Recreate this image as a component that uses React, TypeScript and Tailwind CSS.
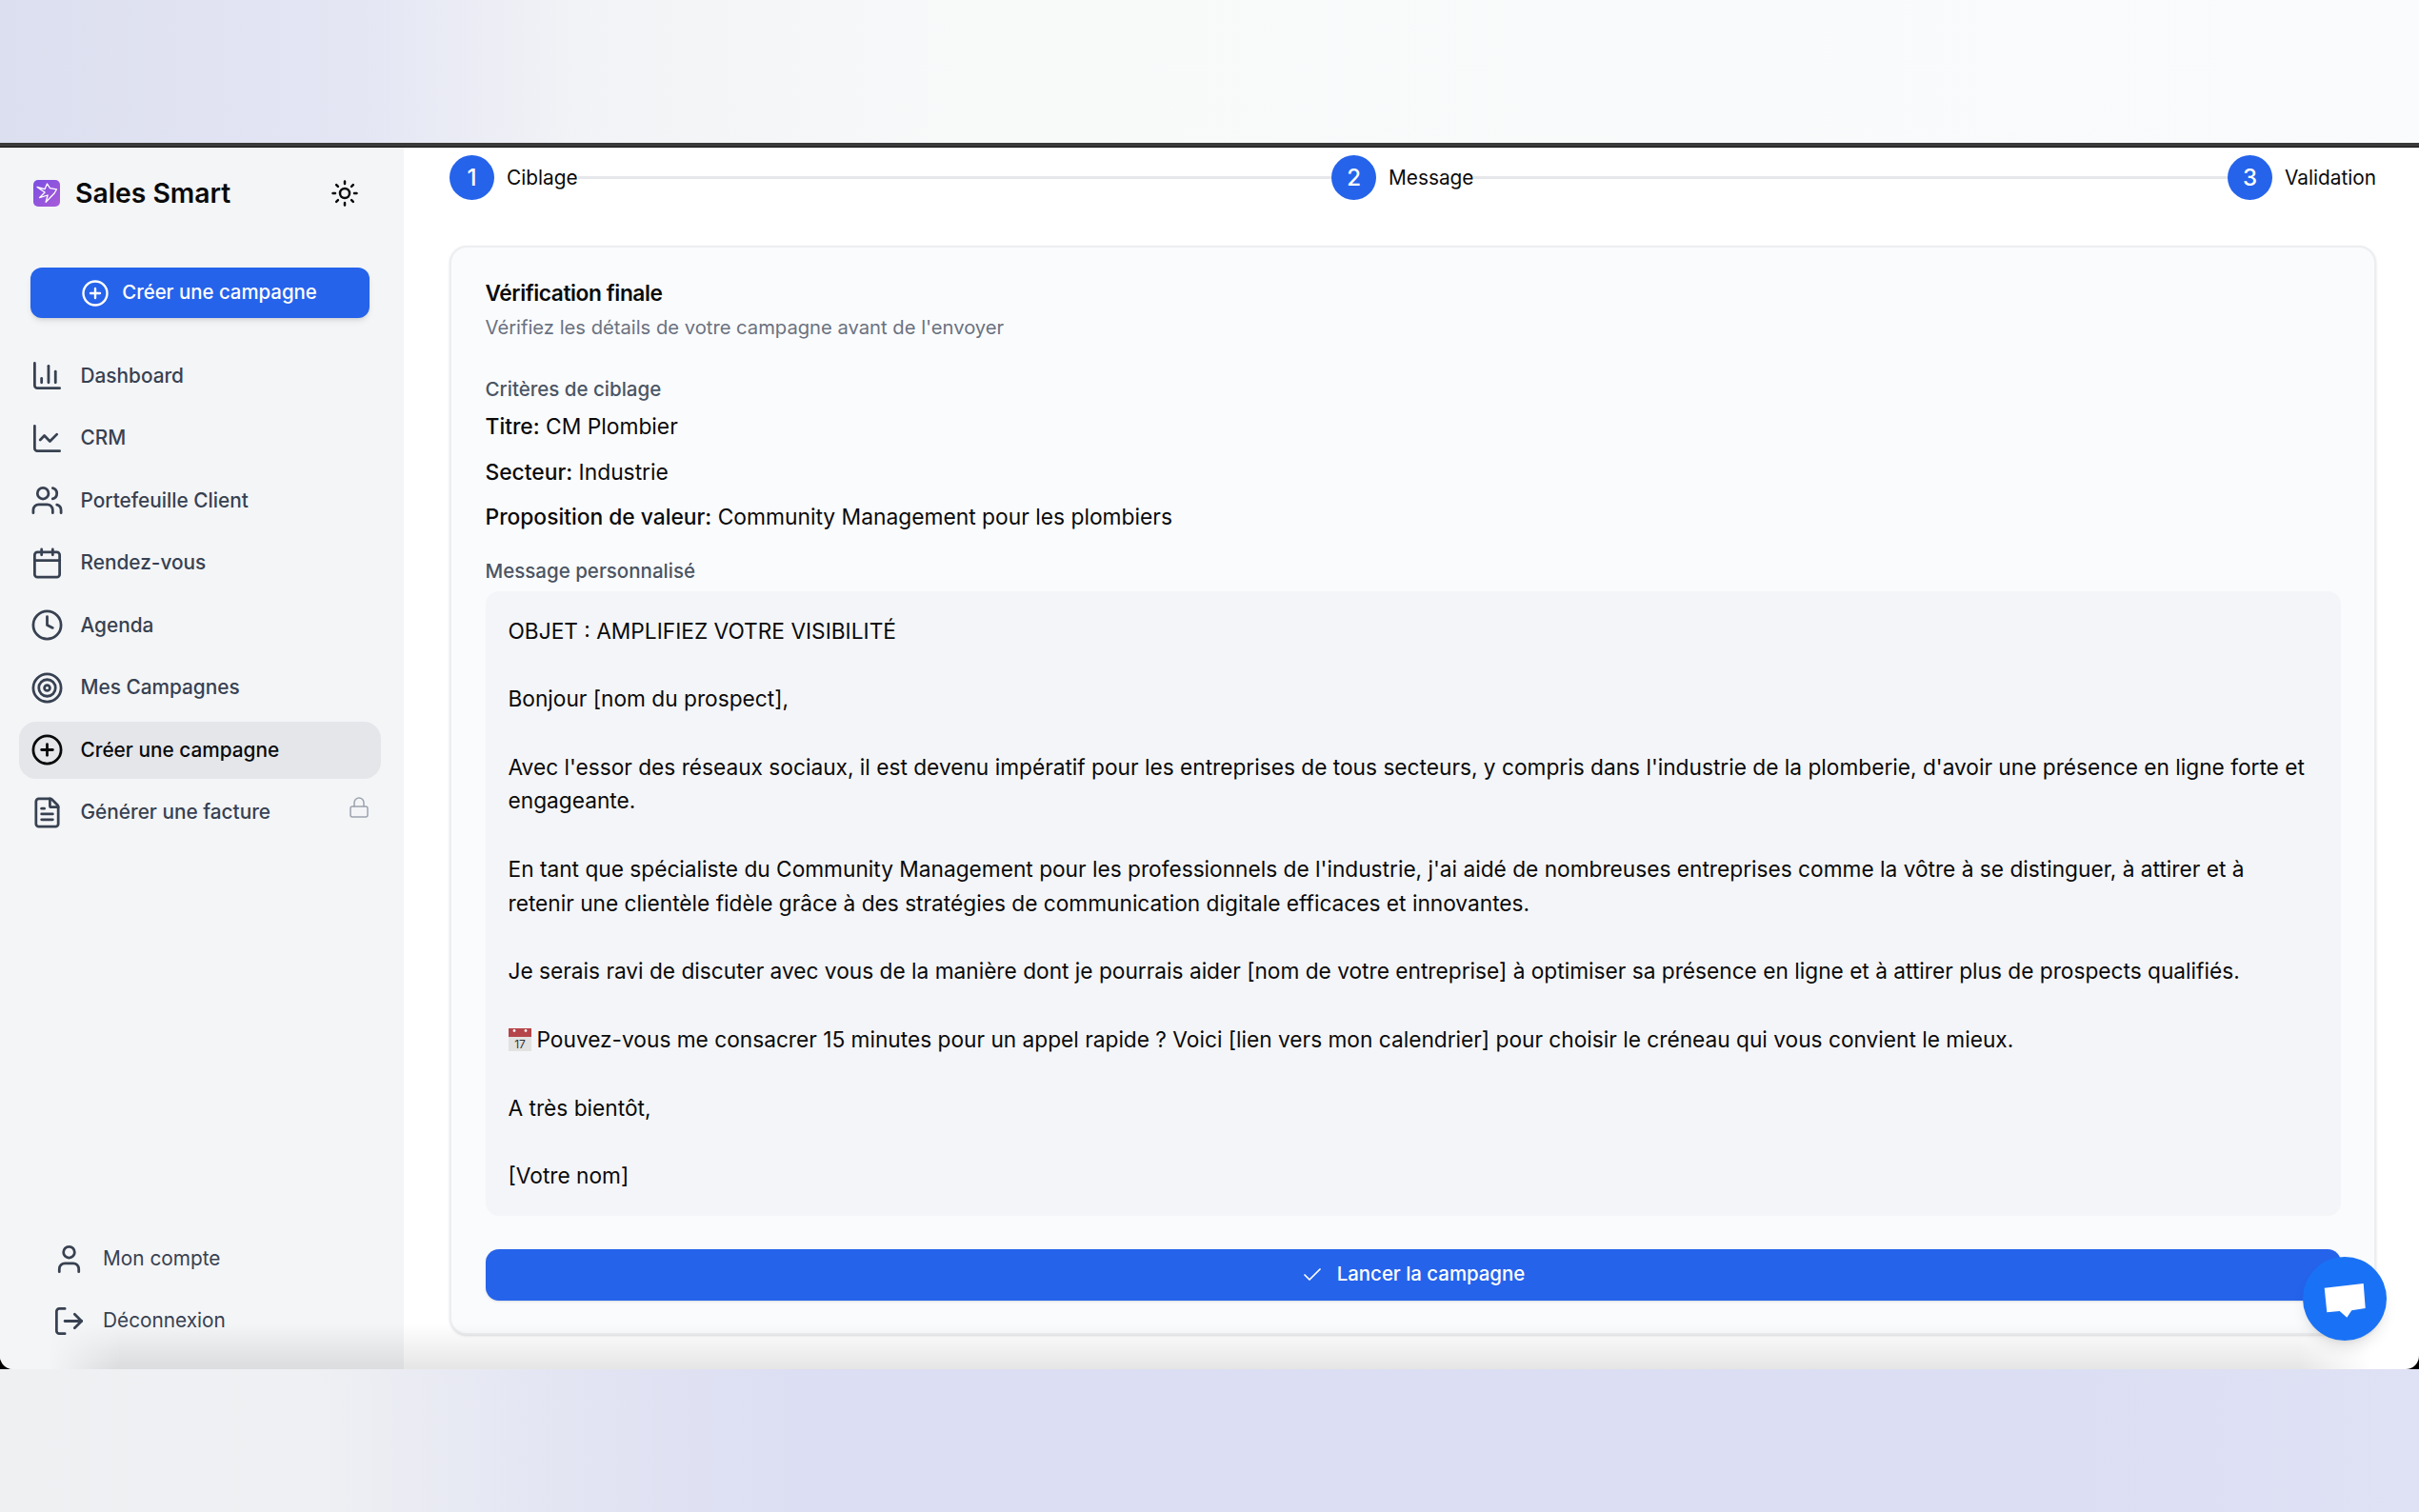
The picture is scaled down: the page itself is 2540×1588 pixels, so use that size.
// App.tsx

import React from "react";
import {
  Calendar,
  ChartColumn,
  ChartLine,
  Check,
  CirclePlus,
  Clock,
  FileText,
  Lock,
  LogOut,
  Sun,
  Target,
  User,
  Users,
} from "lucide-react";

const FONT = { fontFamily: "Inter, 'Liberation Sans', sans-serif" };

const NAV_ITEMS = [
  { label: "Dashboard", icon: ChartColumn },
  { label: "CRM", icon: ChartLine },
  { label: "Portefeuille Client", icon: Users },
  { label: "Rendez-vous", icon: Calendar },
  { label: "Agenda", icon: Clock },
  { label: "Mes Campagnes", icon: Target },
  { label: "Créer une campagne", icon: CirclePlus, active: true },
  { label: "Générer une facture", icon: FileText, locked: true },
];

const Logo = () => (
  <svg width="28" height="28" viewBox="0 0 28 28" className="shrink-0">
    <defs>
      <linearGradient id="logoGrad" x1="0" y1="0" x2="1" y2="1">
        <stop offset="0" stopColor="#7a4fe2" />
        <stop offset="1" stopColor="#a95bd8" />
      </linearGradient>
    </defs>
    <rect width="28" height="28" rx="5" fill="url(#logoGrad)" />
    <path
      d="M4 7.5l8 2.2L14.5 4l3 4.6 7 1.2-2.4 4.2-9 9.2 2-7.2-8.6 2.6 5.6-5.6z"
      fill="none"
      stroke="#fff"
      strokeWidth="1.3"
      strokeLinejoin="round"
    />
  </svg>
);

// le petit calendrier emoji du message
const CalendarEmoji = () => (
  <svg width="24" height="24" viewBox="0 0 24 24" className="inline-block align-[-4px] mr-[6px]">
    <rect width="24" height="24" fill="#e2e2e2" />
    <rect width="24" height="9" fill="#b5444a" />
    <circle cx="6" cy="2.5" r="1.4" fill="#f4f4f4" />
    <circle cx="18" cy="2.5" r="1.4" fill="#f4f4f4" />
    <text x="12" y="21" textAnchor="middle" fontSize="12" fill="#333" fontFamily="Inter, sans-serif">
      17
    </text>
  </svg>
);

const Step = ({ n, label }: { n: number; label: string }) => (
  <div className="flex items-center gap-[13px] shrink-0">
    <div className="w-[47px] h-[47px] rounded-full bg-[#2563eb] text-white flex items-center justify-center text-[24px] font-medium">
      {n}
    </div>
    <span className="text-[20.8px] text-[#0a0a0a]">{label}</span>
  </div>
);

const Line = () => <div className="flex-1 h-[3px] bg-[#e5e7eb]" />;

const Criteria = ({ label, value }: { label: string; value: string }) => (
  <p className="text-[22.8px] leading-[36px] mb-[11.5px] text-[#0a0a0a]">
    <span className="font-medium">{label}:</span> {value}
  </p>
);

export default function App() {
  return (
    <div className="w-[2540px] h-[1588px] flex flex-col overflow-hidden bg-black" style={FONT}>
      <div className="h-[150px] shrink-0 bg-[linear-gradient(90deg,#dcdfef_0%,#e4e6f4_15%,#f2f3f6_24%,#f8f9f9_40%,#fafbfc_100%)]" />
      <div className="h-[5px] shrink-0 bg-[#3a3a3a] border-b border-[#111]" />

      <div className="relative h-[1283px] shrink-0 flex bg-white rounded-b-[14px] overflow-hidden">
        {/* Sidebar */}
        <aside className="w-[424px] shrink-0 bg-[#f4f5f7] flex flex-col">
          <div className="h-[96px] pl-[35px] pr-[47px] flex items-center gap-[16px]">
            <Logo />
            <span className="text-[28.3px] font-semibold text-[#0a0a0a] flex-1">Sales Smart</span>
            <Sun size={30} strokeWidth={2} className="text-[#0a0a0a]" />
          </div>

          <button className="ml-[32px] mr-[36px] mt-[30px] h-[53px] pr-[2px] rounded-[12px] bg-[#2563eb] text-white flex items-center justify-center gap-[13px] text-[20.4px] font-medium shadow-md">
            <CirclePlus size={30} strokeWidth={1.9} />
            Créer une campagne
          </button>

          <nav className="ml-[20px] mr-[24px] mt-[30.5px] flex flex-col gap-[5.5px]">
            {NAV_ITEMS.map((item) => {
              const Icon = item.icon;
              return (
                <div
                  key={item.label}
                  className={
                    item.active
                      ? "h-[60px] rounded-[18px] bg-[#e4e6ea] flex items-center gap-[18px] pl-[11.5px] pr-[11px] text-[#0a0a0a]"
                      : "h-[60px] rounded-[18px] flex items-center gap-[18px] pl-[11.5px] pr-[11px] text-[#374151]"
                  }
                >
                  <Icon size={35} strokeWidth={1.9} className="shrink-0" />
                  <span className="text-[20.8px] font-medium flex-1">{item.label}</span>
                  {item.locked && <Lock size={24} strokeWidth={1.5} className="text-[#9ca3af] mb-[10px]" />}
                </div>
              );
            })}
          </nav>

          <div className="mt-auto pb-[21px] px-[55px] flex flex-col gap-[5px] text-[#374151]">
            <div className="h-[60px] flex items-center gap-[18px]">
              <User size={35} strokeWidth={1.9} />
              <span className="text-[20.8px]">Mon compte</span>
            </div>
            <div className="h-[60px] flex items-center gap-[18px]">
              <LogOut size={35} strokeWidth={1.9} />
              <span className="text-[20.8px]">Déconnexion</span>
            </div>
          </div>
        </aside>

        {/* Contenu */}
        <main className="flex-1 pl-[48px] pr-[45px] pt-[8px]">
          <div className="flex items-center">
            <Step n={1} label="Ciblage" />
            <Line />
            <Step n={2} label="Message" />
            <Line />
            <Step n={3} label="Validation" />
          </div>

          <section className="mt-[48px] h-[1144px] rounded-[18px] border-2 border-[#eceef1] bg-[#fafbfd] px-[35.5px] pt-[33px] shadow-sm">
            <h2 className="text-[22.7px] leading-[30px] font-semibold tracking-[-0.4px] text-[#0a0a0a]">Vérification finale</h2>
            <p className="mt-[5px] text-[20.2px] leading-[32px] text-[#6b7280]">
              Vérifiez les détails de votre campagne avant de l'envoyer
            </p>

            <h3 className="mt-[34px] text-[20.5px] leading-[30px] font-medium text-[#4b5563]">Critères de ciblage</h3>
            <div className="mt-[6px]">
              <Criteria label="Titre" value="CM Plombier" />
              <Criteria label="Secteur" value="Industrie" />
              <Criteria label="Proposition de valeur" value="Community Management pour les plombiers" />
            </div>

            <h3 className="mt-[23.5px] text-[20.5px] leading-[30px] font-medium text-[#4b5563]">Message personnalisé</h3>
            <div className="mt-[6px] h-[656px] rounded-[14px] bg-[#f4f5f8] pl-[24px] pr-[33px] py-[24px] text-[22.7px] leading-[35.8px] text-[#0a0a0a]">
              <p>OBJET : AMPLIFIEZ VOTRE VISIBILITÉ</p>
              <br />
              <p>Bonjour [nom du prospect],</p>
              <br />
              <p>
                Avec l'essor des réseaux sociaux, il est devenu impératif pour les entreprises de tous secteurs, y compris
                dans l'industrie de la plomberie, d'avoir une présence en ligne forte et engageante.
              </p>
              <br />
              <p>
                En tant que spécialiste du Community Management pour les professionnels de l'industrie, j'ai aidé de
                nombreuses entreprises comme la vôtre à se distinguer, à attirer et à retenir une clientèle fidèle grâce à
                des stratégies de communication digitale efficaces et innovantes.
              </p>
              <br />
              <p>
                Je serais ravi de discuter avec vous de la manière dont je pourrais aider [nom de votre entreprise] à
                optimiser sa présence en ligne et à attirer plus de prospects qualifiés.
              </p>
              <br />
              <p>
                <CalendarEmoji />
                Pouvez-vous me consacrer 15 minutes pour un appel rapide ? Voici [lien vers mon calendrier] pour choisir le
                créneau qui vous convient le mieux.
              </p>
              <br />
              <p>A très bientôt,</p>
              <br />
              <p>[Votre nom]</p>
            </div>

            <button className="mt-[35px] w-full h-[54px] rounded-[14px] bg-[#2563eb] text-white flex items-center justify-center gap-[14px] text-[20.4px] font-medium shadow-sm">
              <Check size={24} strokeWidth={1.75} />
              Lancer la campagne
            </button>
          </section>
        </main>

        {/* ombre de la fenêtre */}
        <div className="absolute left-0 right-0 bottom-0 h-[48px] bg-gradient-to-t from-black/10 to-transparent [mask-image:linear-gradient(90deg,transparent_2%,black_5%,black_95%,transparent_98%)] pointer-events-none" />

        {/* bulle de chat */}
        <div className="absolute left-[2418px] top-[1165px] w-[88px] h-[88px] rounded-full bg-[#1972f5] shadow-lg">
          <svg width="88" height="88" viewBox="0 0 88 88">
            <polygon points="22.7,32.7 63.7,28 65.7,54 51.3,56.3 46.3,63.7 38.7,57 25.3,58.3" fill="#fff" />
          </svg>
        </div>
      </div>

      <div className="h-[150px] shrink-0 bg-[linear-gradient(90deg,#eff0f2_0%,#eff0f3_13%,#e4e6f3_22%,#dcdef3_33%,#dcdff3_85%,#dfe1f5_100%)]" />
    </div>
  );
}
